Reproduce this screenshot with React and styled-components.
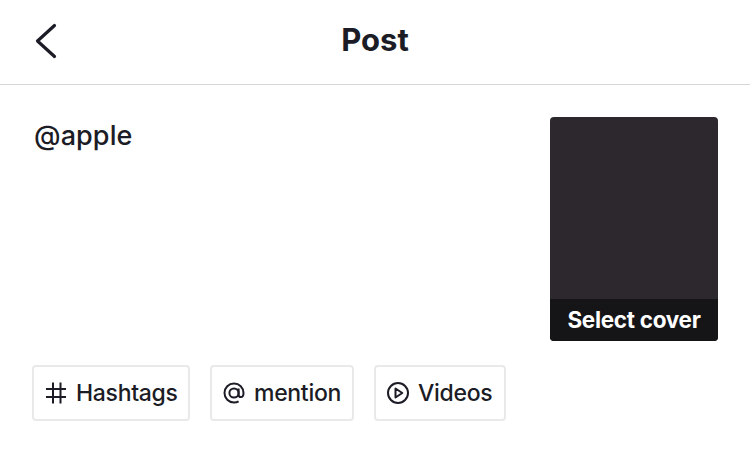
import styled, { createGlobalStyle } from "styled-components";

const GlobalStyle = createGlobalStyle`
  body {
    margin: 0;
    background: #fff;
    font-family: "Inter", "Liberation Sans", sans-serif;
    color: #1b1c25;
  }
`;

const Page = styled.div`
  width: 750px;
  height: 451px;
  overflow: hidden;
`;

const Header = styled.header`
  height: 84px;
  border-bottom: 1px solid #d6d6d8;
  display: grid;
  grid-template-columns: 1fr auto 1fr;
  align-items: center;
  padding: 0 32px;
`;

const BackButton = styled.button`
  width: 30px;
  height: 40px;
  padding: 0;
  border: 0;
  background: none;
  color: inherit;
  display: block;
  justify-self: start;
`;

const Title = styled.h1`
  margin: 0;
  font-size: 31px;
  font-weight: 700;
  line-height: 40px;
  margin-top: -4px;
`;

const Body = styled.main`
  display: flex;
  justify-content: space-between;
  padding: 32px 32px 0 34px;
`;

const Caption = styled.div`
  font-size: 27px;
  font-weight: 500;
  letter-spacing: 0.1px;
  line-height: 38px;
`;

const Cover = styled.div`
  width: 168px;
  height: 224px;
  border-radius: 4px;
  overflow: hidden;
  background: #2c282d;
  display: flex;
  align-items: flex-end;
`;

const CoverLabel = styled.div`
  width: 100%;
  height: 42px;
  line-height: 41px;
  background: #151416;
  color: #fff;
  font-size: 22.5px;
  font-weight: 700;
  letter-spacing: -0.3px;
  text-align: center;
`;

const Chips = styled.div`
  display: flex;
  gap: 20px;
  padding: 24px 32px 0;
`;

const Chip = styled.button`
  height: 56px;
  width: ${(p) => p.$w}px;
  box-sizing: border-box;
  border: 2px solid #e9e9ea;
  border-radius: 4px;
  background: #fff;
  color: inherit;
  display: flex;
  align-items: center;
  gap: 9px;
  padding: 0 0 0 11px;
  font-family: inherit;
  font-size: 23px;
  font-weight: 500;
  letter-spacing: -0.3px;
`;

const Icon = styled.svg`
  width: 22px;
  height: 22px;
  flex: none;
  fill: none;
  stroke: currentColor;
  stroke-width: 2;
`;

export default function App() {
  return (
    <Page>
      <GlobalStyle />
      <Header>
        <BackButton aria-label="Back">
          <svg width="30" height="40" viewBox="0 0 30 40" fill="none" stroke="currentColor" strokeWidth="3.2" strokeLinecap="round" strokeLinejoin="round">
            <path d="M22.5 3.500 L5.500 19 L22.500 34.500" />
          </svg>
        </BackButton>
        <Title>Post</Title>
      </Header>
      <Body>
        <Caption>@apple</Caption>
        <Cover>
          <CoverLabel>Select cover</CoverLabel>
        </Cover>
      </Body>
      <Chips>
        <Chip $w={158}>
          <Icon viewBox="0 0 22 22">
            <path d="M8 0.500v21M15.500 0.500v21M1 7h20M1 15h20" />
          </Icon>
          Hashtags
        </Chip>
        <Chip $w={144}>
          <Icon viewBox="0 0 22 22">
            <circle cx="11" cy="11" r="4.600" />
            <path d="M15.600 6.400v5.800c0 1.800 1 2.900 2.300 2.900s2.600-1.300 2.600-4.100C20.500 5.700 16.300 1.500 11 1.500S1.500 5.700 1.500 11s4.200 9.500 9.500 9.500c1.800 0 3.300-.4 4.600-1.200" />
          </Icon>
          mention
        </Chip>
        <Chip $w={132}>
          <Icon viewBox="0 0 22 22">
            <circle cx="11" cy="11" r="10" />
            <path d="M8.500 6.500v9l6.800-4.500z" strokeLinejoin="round" />
          </Icon>
          Videos
        </Chip>
      </Chips>
    </Page>
  );
}
